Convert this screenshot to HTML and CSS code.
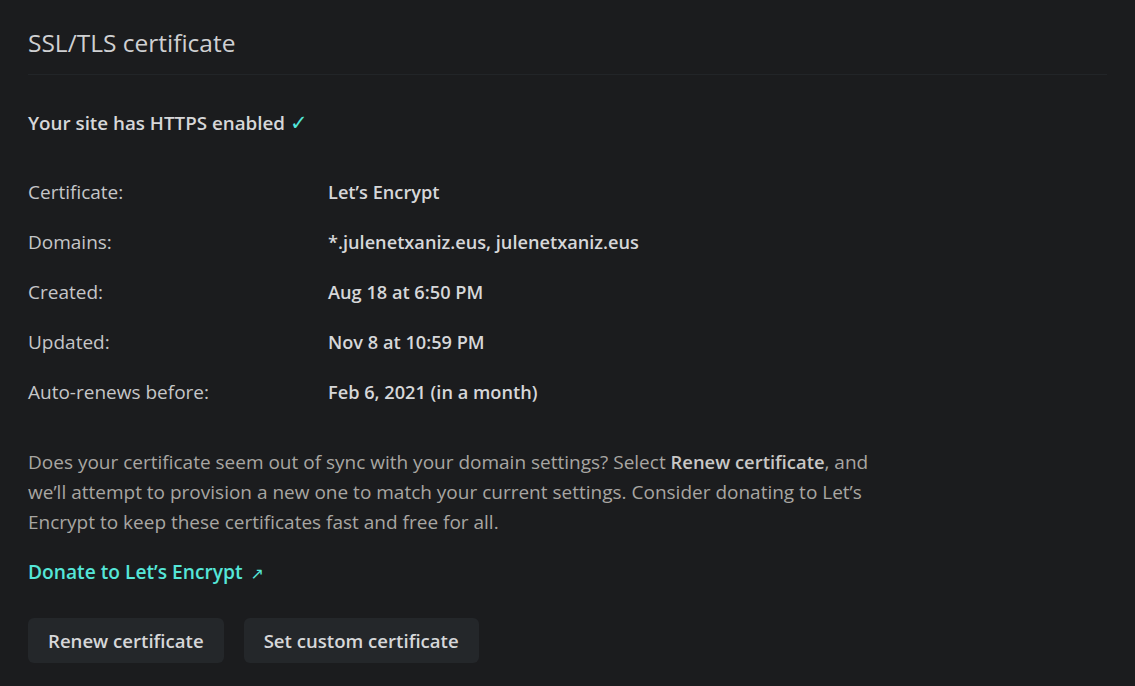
FILE: index.html
```html
<!DOCTYPE html>
<html lang="en">
<head>
<meta charset="utf-8">
<title>SSL/TLS certificate</title>
<link rel="stylesheet" href="styles.css">
</head>
<body>
<section class="card">
  <h2 class="card-title">SSL/TLS certificate</h2>
  <p class="status">Your site has HTTPS enabled <span class="check">✓</span></p>
  <dl class="details">
    <div class="row"><dt>Certificate:</dt><dd>Let’s Encrypt</dd></div>
    <div class="row"><dt>Domains:</dt><dd>*.julenetxaniz.eus, julenetxaniz.eus</dd></div>
    <div class="row"><dt>Created:</dt><dd>Aug 18 at 6:50 PM</dd></div>
    <div class="row"><dt>Updated:</dt><dd>Nov 8 at 10:59 PM</dd></div>
    <div class="row"><dt>Auto-renews before:</dt><dd>Feb 6, 2021 (in a month)</dd></div>
  </dl>
  <p class="note">Does your certificate seem out of sync with your domain settings? Select <strong>Renew certificate</strong>, and we’ll attempt to provision a new one to match your current settings. Consider donating to Let’s Encrypt to keep these certificates fast and free for all.</p>
  <p class="donate"><a href="#">Donate to Let’s Encrypt <span class="arrow">↗</span></a></p>
  <div class="actions">
    <button class="btn" type="button">Renew certificate</button>
    <button class="btn" type="button">Set custom certificate</button>
  </div>
</section>
</body>
</html>
```

FILE: styles.css
```css
* { box-sizing: border-box; }
html, body {
  margin: 0;
  background: #1b1c1e;
}
body {
  font-family: "Open Sans", sans-serif;
  color: #d6d7d9;
  font-size: 19px;
}
.card {
  padding: 24px 28px 0 28px;
}
.card-title {
  margin: 0;
  font-size: 24.5px;
  font-weight: 400;
  color: #cfd0d2;
  line-height: 38px;
  padding-bottom: 12px;
  border-bottom: 1px solid #222528;
}
.status {
  margin: 34px 0 0 0;
  font-size: 18.8px;
  font-weight: 600;
  line-height: 28px;
}
.check {
  color: #52e6da;
  font-family: "DejaVu Sans", sans-serif;
  font-size: 21px;
  font-weight: 700;
}
.details {
  margin: 30px 0 0 0;
}
.row {
  display: flex;
  height: 50px;
  align-items: center;
}
.row dt {
  width: 300px;
  color: #c5c6c8;
}
.row dd {
  margin: 0;
  font-size: 18.2px;
  font-weight: 600;
}
.note {
  margin: 30px 0 0 0;
  width: 862px;
  line-height: 30px;
  color: #a8a6a2;
}
.note strong { color: #c9c8c6; font-weight: 600; font-size: 18.4px; }
.donate {
  margin: 20px 0 0 0;
  line-height: 30px;
}
.donate a {
  color: #55e6d8;
  font-weight: 600;
  font-size: 19.2px;
  text-decoration: none;
}
.arrow {
  font-weight: 400;
  font-size: 16px;
  margin-left: 3px;
  font-family: "DejaVu Sans", sans-serif;
}
.actions {
  display: flex;
  gap: 20px;
  margin-top: 29px;
}
.btn {
  font-family: inherit;
  font-size: 18.6px;
  font-weight: 600;
  color: #d6d7d9;
  background: #24272a;
  border: none;
  border-radius: 6px;
  height: 45px;
  padding: 0 20px;
}
```
